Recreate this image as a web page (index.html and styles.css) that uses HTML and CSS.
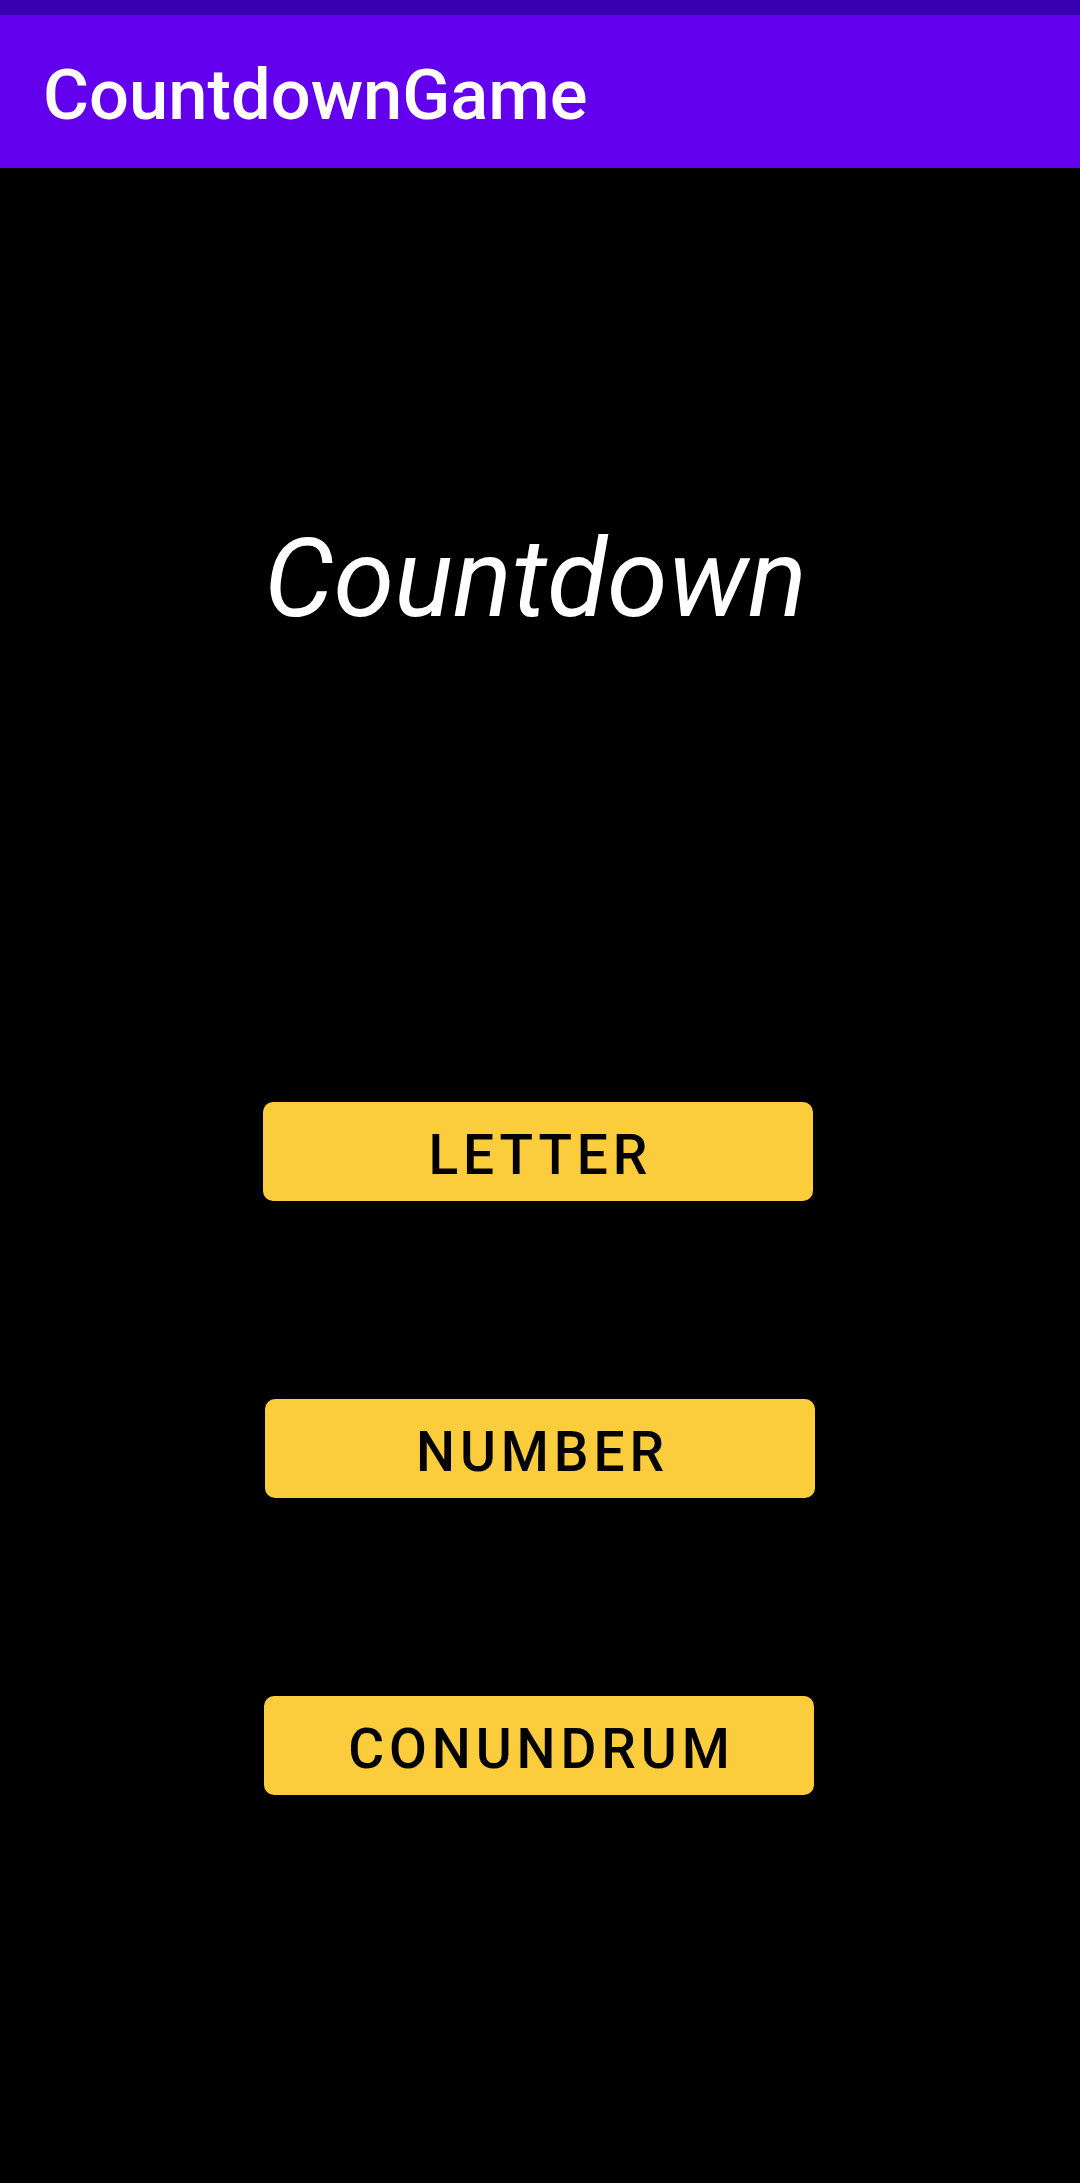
FILE: index.html
```html
<!DOCTYPE html>
<html>
<head>
<meta charset="utf-8">
<link rel="stylesheet" href="styles.css">
</head>
<body>
<div class="status-bar"></div>
<header class="app-bar">
  <h1 class="app-title">CountdownGame</h1>
</header>
<main class="content">
  <div class="game-title">Countdown</div>
  <div class="buttons">
    <button class="btn btn-letter">LETTER</button>
    <button class="btn btn-number">NUMBER</button>
    <button class="btn btn-conundrum">CONUNDRUM</button>
  </div>
</main>
</body>
</html>
```
FILE: styles.css
```css
html, body {
  margin: 0;
  padding: 0;
  background: #000000;
  width: 1080px;
  height: 2183px;
  overflow: hidden;
}
body {
  font-family: Roboto, "Noto Sans", sans-serif;
}
.status-bar {
  height: 15px;
  background: #3700B3;
}
.app-bar {
  height: 153px;
  box-sizing: border-box;
  background: #6200EE;
  display: flex;
  align-items: center;
  padding-left: 43px;
  padding-top: 7px;
}
.app-title {
  margin: 0;
  color: #ffffff;
  font-weight: 500;
  font-size: 70.5px;
  line-height: 1;
}
.content {
  display: flex;
  flex-direction: column;
  align-items: center;
}
.game-title {
  margin-top: 346px;
  padding-right: 9px;
  color: #ffffff;
  font-style: italic;
  font-weight: 400;
  font-size: 110px;
  line-height: 130px;
  height: 130px;
  text-align: center;
}
.buttons {
  display: flex;
  flex-direction: column;
  align-items: flex-start;
  width: 1080px;
  margin-top: 458px;
}
.btn {
  box-sizing: border-box;
  width: 550px;
  height: 99px;
  margin-left: 263px;
  background: #FBCC3C;
  border: none;
  border-radius: 10px;
  color: #000000;
  font-family: Roboto, "Noto Sans", sans-serif;
  font-weight: 500;
  font-size: 55px;
  letter-spacing: 4.9px;
  padding: 6px 0 0 4.9px;
  display: flex;
  align-items: center;
  justify-content: center;
}
.btn-number {
  margin-top: 198px;
  margin-left: 265px;
}
.btn-conundrum {
  margin-top: 198px;
  margin-left: 264px;
}
```
